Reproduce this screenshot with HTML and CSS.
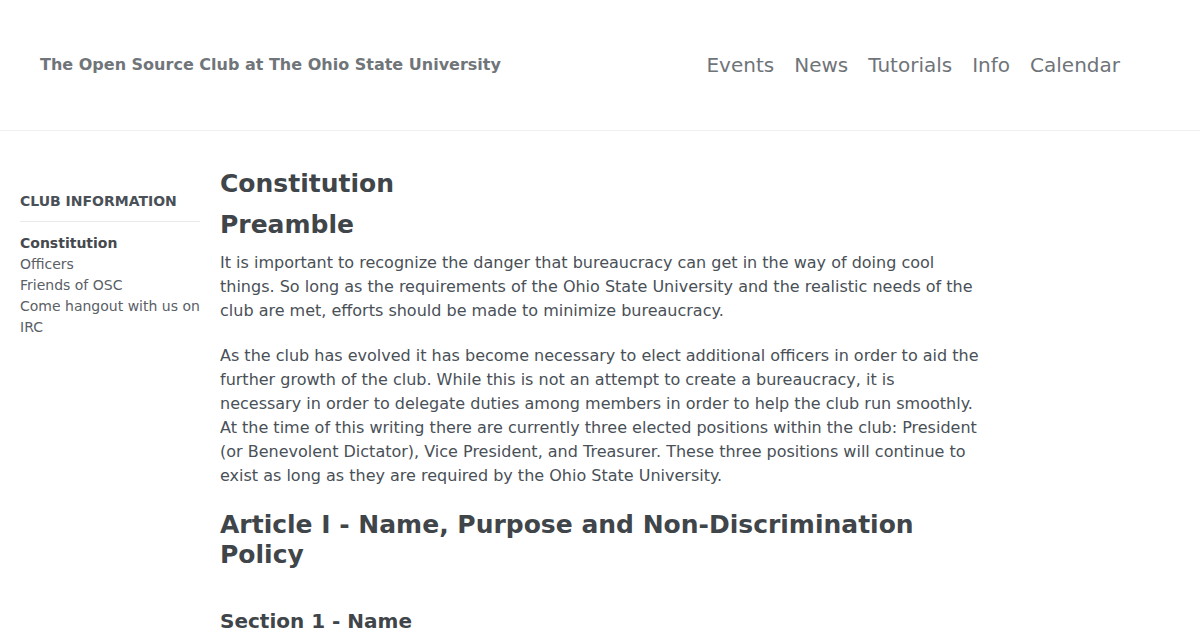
FILE: index.html
```html
<!DOCTYPE html>
<html lang="en">
<head>
<meta charset="utf-8">
<title>Constitution - The Open Source Club at The Ohio State University</title>
<link rel="stylesheet" href="styles.css">
</head>
<body>
<header class="site-header">
  <a class="brand" href="#">The Open Source Club at The Ohio State University</a>
  <nav class="main-nav">
    <a href="#">Events</a>
    <a href="#">News</a>
    <a href="#">Tutorials</a>
    <a href="#">Info</a>
    <a href="#">Calendar</a>
  </nav>
</header>
<div class="page">
  <aside class="sidebar">
    <h3 class="side-title">CLUB INFORMATION</h3>
    <ul class="side-list">
      <li><a class="active" href="#">Constitution</a></li>
      <li><a href="#">Officers</a></li>
      <li><a href="#">Friends of OSC</a></li>
      <li><a href="#">Come hangout with us on IRC</a></li>
    </ul>
  </aside>
  <main class="content">
    <h1 class="h-main">Constitution</h1>
    <h2 class="h-main">Preamble</h2>
    <p>It is important to recognize the danger that bureaucracy can get in the way of doing cool things. So long as the requirements of the Ohio State University and the realistic needs of the club are met, efforts should be made to minimize bureaucracy.</p>
    <p>As the club has evolved it has become necessary to elect additional officers in order to aid the further growth of the club. While this is not an attempt to create a bureaucracy, it is necessary in order to delegate duties among members in order to help the club run smoothly. At the time of this writing there are currently three elected positions within the club: President (or Benevolent Dictator), Vice President, and Treasurer. These three positions will continue to exist as long as they are required by the Ohio State University.</p>
    <h2 class="h-article">Article I - Name, Purpose and Non-Discrimination Policy</h2>
    <h3 class="h-section">Section 1 - Name</h3>
  </main>
</div>
</body>
</html>
```
FILE: styles.css
```css
* { box-sizing: border-box; }
html, body { margin: 0; padding: 0; }
body {
  font-family: "DejaVu Sans", sans-serif;
  color: #495057;
  background: #fff;
  font-size: 16px;
  line-height: 24px;
}
a { text-decoration: none; color: inherit; }

.site-header {
  height: 131px;
  display: flex;
  align-items: center;
  justify-content: space-between;
  padding: 0 80px 0 40px;
  border-bottom: 1px solid #edeff1;
}
.brand {
  font-weight: bold;
  font-size: 16px;
  color: #70757a;
}
.main-nav {
  display: flex;
  gap: 20px;
  font-size: 20px;
  color: #6f7479;
}

.page {
  display: flex;
  gap: 20px;
  padding: 38px 20px 0 20px;
}
.sidebar {
  width: 180px;
  flex: none;
  padding-top: 22px;
}
.side-title {
  font-size: 14px;
  font-weight: bold;
  color: #495057;
  margin: 0;
  line-height: 20px;
  padding-bottom: 10px;
  border-bottom: 1px solid #e8eaec;
}
.side-list {
  list-style: none;
  margin: 0;
  padding: 11px 0 0 0;
  font-size: 14px;
  line-height: 21px;
  color: #5a6066;
}
.side-list .active { font-weight: bold; color: #45494e; }

.content {
  width: 760px;
  flex: none;
}
.content h1, .content h2, .content h3 {
  color: #40454a;
  font-weight: bold;
  margin: 0;
}
.h-main {
  font-size: 25px;
  line-height: 30px;
  margin-bottom: 11px !important;
}
.content p {
  margin: 0 0 21px 0;
}
.h-article {
  font-size: 25px;
  line-height: 30px;
  margin-top: 22px !important;
  margin-bottom: 38px !important;
}
.h-section {
  font-size: 20px;
  line-height: 26px;
}
```
